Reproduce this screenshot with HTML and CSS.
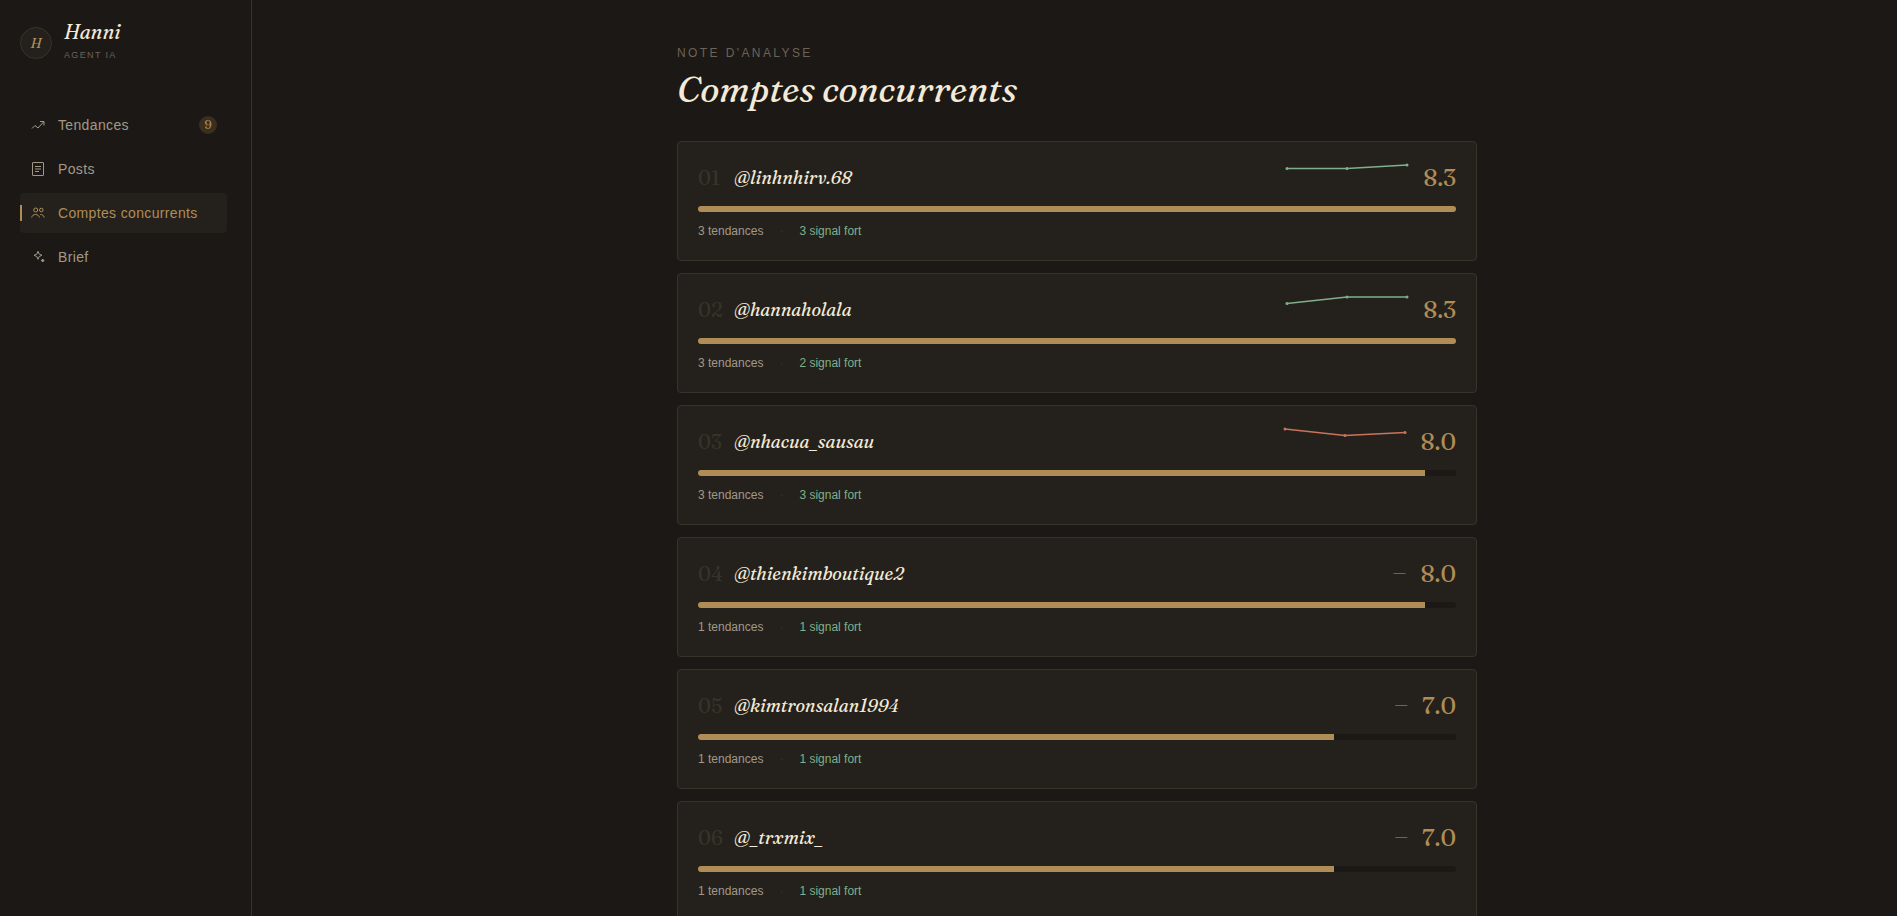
FILE: index.html
```html
<!DOCTYPE html>
<html lang="fr">

<head>
    <meta charset="utf-8">
    <meta name="viewport" content="width=device-width, initial-scale=1">
    <title>Hanni - Comptes concurrents</title>
    <link rel="stylesheet" href="styles.css">
</head>

<body>
    <aside class="sidebar">
        <div class="brand">
            <div class="avatar">H</div>
            <div class="brand-text">
                <div class="brand-name">Hanni</div>
                <div class="brand-role">Agent IA</div>
            </div>
        </div>
        <nav class="nav">
            <a class="nav-item" href="#tendances">
                <svg class="icon" viewBox="0 0 16 16"><path d="M2 11.5 5 8.5 8 11 13.500 5M10 4.500h4V8.500" /></svg>
                Tendances
                <span class="badge">9</span>
            </a>
            <a class="nav-item" href="#posts">
                <svg class="icon" viewBox="0 0 16 16"><rect x="2.500" y="1.500" width="11" height="13" rx="0.500" /><path d="M5 5.500h6M5 8h6M5 10.500h4" /></svg>
                Posts
            </a>
            <a class="nav-item active" href="#comptes" aria-current="page">
                <svg class="icon" viewBox="0 0 16 16"><circle cx="5.700" cy="5" r="2" /><circle cx="11.300" cy="5" r="1.800" /><path d="M1.700 12.500c.4-2 1.800-3 3.800-3s3.400 1 3.900 3M10.300 9.500c2-.2 3.400.9 3.800 3" /></svg>
                Comptes concurrents
            </a>
            <a class="nav-item" href="#brief">
                <svg class="icon" viewBox="0 0 16 16"><path d="M8 2.300 9.200 5.100 12 6.300 9.200 7.500 8 10.300 6.800 7.500 4 6.300 6.800 5.100z" /><path fill="currentColor" d="M12.700 10l.5 1 1 .5-1 .5-.5 1-.5-1-1-.5 1-.5z" /></svg>
                Brief
            </a>
        </nav>
    </aside>

    <main class="main">
        <div class="column">
            <p class="eyebrow">Note d'analyse</p>
            <h1>Comptes concurrents</h1>

            <div class="cards">
                <article class="card">
                    <div class="card-head">
                        <span class="rank">01</span>
                        <h2>@linhnhirv.68</h2>
                        <svg class="spark up" viewBox="0 0 128 32"><polyline points="4,6.500 64,6.500 124,3" /><circle cx="4" cy="6.500" r="1.500" /><circle cx="64" cy="6.500" r="1.500" /><circle cx="124" cy="3" r="1.500" /></svg>
                        <span class="score">8.3</span>
                    </div>
                    <div class="bar"><div class="fill" style="width: 100%"></div></div>
                    <div class="meta"><span>3 tendances</span><span class="dot">·</span><span class="strong">3 signal fort</span></div>
                </article>

                <article class="card">
                    <div class="card-head">
                        <span class="rank">02</span>
                        <h2>@hannaholala</h2>
                        <svg class="spark up" viewBox="0 0 128 32"><polyline points="4,9.500 64,3 124,3" /><circle cx="4" cy="9.500" r="1.500" /><circle cx="64" cy="3" r="1.500" /><circle cx="124" cy="3" r="1.500" /></svg>
                        <span class="score">8.3</span>
                    </div>
                    <div class="bar"><div class="fill" style="width: 100%"></div></div>
                    <div class="meta"><span>3 tendances</span><span class="dot">·</span><span class="strong">2 signal fort</span></div>
                </article>

                <article class="card">
                    <div class="card-head">
                        <span class="rank">03</span>
                        <h2>@nhacua_sausau</h2>
                        <svg class="spark down" viewBox="0 0 128 32"><polyline points="4,3 64,9.500 124,6.500" /><circle cx="4" cy="3" r="1.500" /><circle cx="64" cy="9.500" r="1.500" /><circle cx="124" cy="6.500" r="1.500" /></svg>
                        <span class="score">8.0</span>
                    </div>
                    <div class="bar"><div class="fill" style="width: 95.9%"></div></div>
                    <div class="meta"><span>3 tendances</span><span class="dot">·</span><span class="strong">3 signal fort</span></div>
                </article>

                <article class="card">
                    <div class="card-head">
                        <span class="rank">04</span>
                        <h2>@thienkimboutique2</h2>
                        <span class="no-trend">—</span>
                        <span class="score">8.0</span>
                    </div>
                    <div class="bar"><div class="fill" style="width: 95.9%"></div></div>
                    <div class="meta"><span>1 tendances</span><span class="dot">·</span><span class="strong">1 signal fort</span></div>
                </article>

                <article class="card">
                    <div class="card-head">
                        <span class="rank">05</span>
                        <h2>@kimtronsalan1994</h2>
                        <span class="no-trend">—</span>
                        <span class="score">7.0</span>
                    </div>
                    <div class="bar"><div class="fill" style="width: 83.9%"></div></div>
                    <div class="meta"><span>1 tendances</span><span class="dot">·</span><span class="strong">1 signal fort</span></div>
                </article>

                <article class="card">
                    <div class="card-head">
                        <span class="rank">06</span>
                        <h2>@_trxmix_</h2>
                        <span class="no-trend">—</span>
                        <span class="score">7.0</span>
                    </div>
                    <div class="bar"><div class="fill" style="width: 83.9%"></div></div>
                    <div class="meta"><span>1 tendances</span><span class="dot">·</span><span class="strong">1 signal fort</span></div>
                </article>
            </div>
        </div>
    </main>
</body>

</html>
```
FILE: styles.css
```css
* {
    box-sizing: border-box;
}

body {
    display: flex;
    height: 100vh;
    margin: 0;
    background: #1c1815;
    color: #f3ead7;
    font-family: "Liberation Sans", Arial, sans-serif;
    font-size: 14px;
}

h1, h2, p {
    margin: 0;
}

h1, h2, .brand-name, .avatar, .badge, .rank, .score {
    font-family: Fraunces, "Liberation Serif", Georgia, serif;
}

/* sidebar */
.sidebar {
    flex: none;
    width: 252px;
    padding: 20px 24px 20px 20px;
    border-right: 1px solid #38332a;
}

.brand {
    display: flex;
    align-items: center;
    gap: 12px;
    margin-bottom: 39px;
}

.avatar {
    display: flex;
    align-items: center;
    justify-content: center;
    width: 32px;
    height: 32px;
    border: 1px solid #38332a;
    border-radius: 50%;
    background: #24211c;
    color: #b08d57;
    font-size: 14px;
    font-style: italic;
    font-weight: 500;
}

.brand-text {
    padding-bottom: 5px;
}

.brand-name {
    font-size: 20px;
    font-style: italic;
    font-weight: 500;
    line-height: 24px;
}

.brand-role {
    margin-top: 5px;
    color: #6b6356;
    font-size: 9px;
    letter-spacing: 0.15em;
    line-height: 12px;
    text-transform: uppercase;
}

.nav {
    display: flex;
    flex-direction: column;
    gap: 4px;
}

.nav-item {
    position: relative;
    display: flex;
    align-items: center;
    gap: 12px;
    height: 40px;
    padding: 0 10px;
    border-radius: 4px;
    color: #a39887;
    letter-spacing: 0.025em;
    text-decoration: none;
}

.nav-item.active {
    background: #24211c;
    color: #b08d57;
}

.nav-item.active::before {
    content: "";
    position: absolute;
    top: 12px;
    left: 0;
    width: 2px;
    height: 16px;
    background: #b08d57;
}

.icon {
    width: 16px;
    height: 16px;
    fill: none;
    stroke: currentColor;
}

.badge {
    width: 18px;
    margin-left: auto;
    border-radius: 9px;
    background: #3a2e20;
    color: #b08d57;
    font-size: 12px;
    font-weight: 500;
    font-variant-numeric: lining-nums;
    letter-spacing: 0;
    line-height: 18px;
    text-align: center;
}

/* content */
.main {
    flex: 1;
    padding: 44px 40px 44px 45px;
    overflow: hidden;
}

.column {
    max-width: 800px;
    margin: 0 auto;
}

.eyebrow {
    color: #6b6356;
    font-size: 12px;
    letter-spacing: 0.2em;
    line-height: 18px;
    text-transform: uppercase;
}

h1 {
    margin: 5px 0 30px;
    font-size: 36px;
    font-style: italic;
    font-weight: 500;
    line-height: 44px;
}

.cards {
    display: grid;
    gap: 12px;
}

.card {
    padding: 20px;
    border: 1px solid #38332a;
    border-radius: 4px;
    background: #24211c;
}

.card-head {
    display: flex;
    align-items: center;
    gap: 12px;
    height: 30px;
    margin-bottom: 14px;
}

.rank {
    width: 24px;
    color: #38332a;
    font-size: 20px;
}

h2 {
    flex: 1;
    font-size: 18px;
    font-style: italic;
    font-weight: 500;
}

.spark {
    align-self: flex-start;
    width: 128px;
    height: 32px;
    fill: none;
    stroke: currentColor;
    stroke-width: 1.5;
}

.spark circle {
    fill: currentColor;
    stroke: none;
}

.up {
    color: #7fb08a;
}

.down {
    color: #c9745a;
}

.no-trend {
    color: #6b6356;
    font-size: 12px;
    padding-right: 3px;
}

.score {
    color: #b08d57;
    font-size: 24px;
}

.bar {
    height: 6px;
    border-radius: 3px;
    background: #1c1815;
    overflow: hidden;
}

.fill {
    height: 100%;
    background: #b08d57;
}

.meta {
    display: flex;
    gap: 16px;
    margin-top: 10px;
    color: #a39887;
    font-size: 12px;
    line-height: 18px;
}

.dot {
    color: #38332a;
}

.strong {
    color: #7fb08a;
}
```
